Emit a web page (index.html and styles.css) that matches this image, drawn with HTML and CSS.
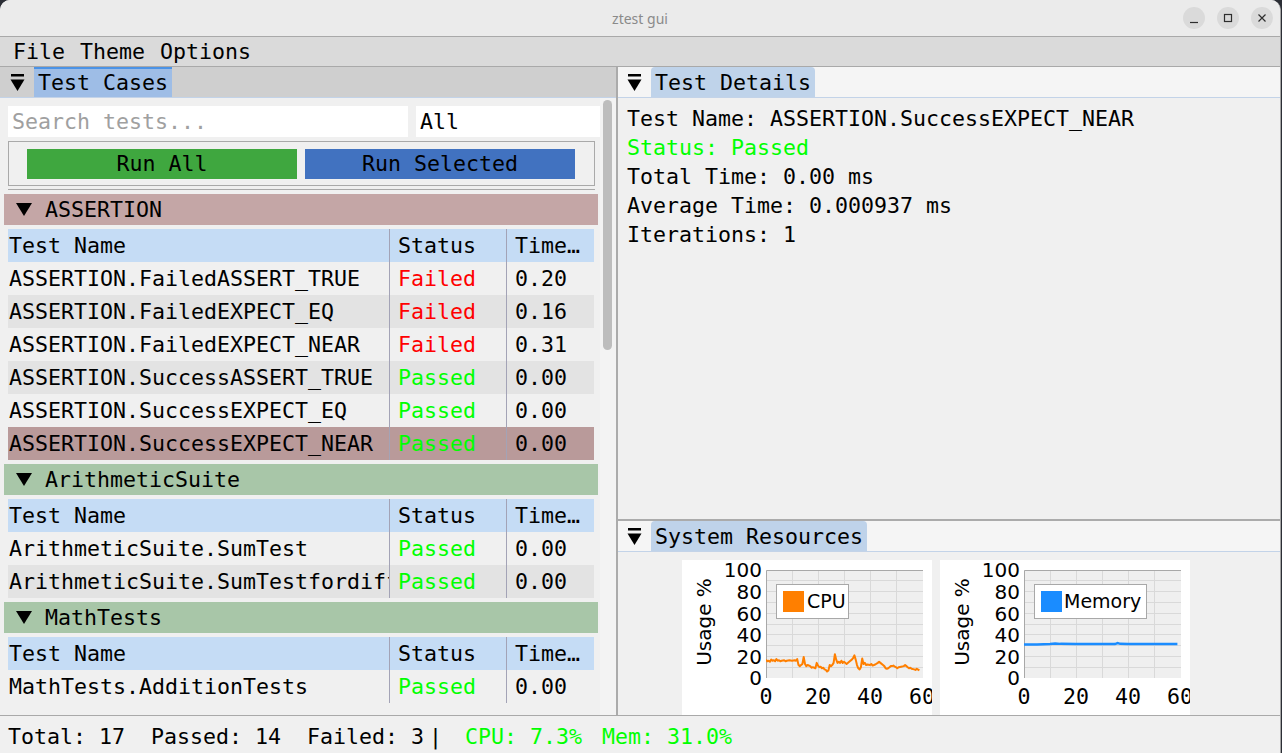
FILE: index.html
```html
<!DOCTYPE html>
<html>
<head>
<meta charset="utf-8">
<title>ztest gui</title>
<link rel="stylesheet" href="styles.css">
</head>
<body>
<div class="window">
  <div class="titlebar">
    <span></span>
    <span class="title">ztest gui</span>
    <div class="wbtns">
      <span class="wbtn"><svg width="22" height="22" viewBox="0 0 22 22"><line x1="7" y1="15.5" x2="15" y2="15.5" stroke="#2e2e2e" stroke-width="1.2"/></svg></span>
      <span class="wbtn"><svg width="22" height="22" viewBox="0 0 22 22"><rect x="7.5" y="7.5" width="7" height="7" fill="none" stroke="#2e2e2e" stroke-width="1.2"/></svg></span>
      <span class="wbtn"><svg width="22" height="22" viewBox="0 0 22 22"><path d="M7.5 7.5 L14.5 14.5 M14.5 7.5 L7.5 14.5" stroke="#2e2e2e" stroke-width="1.2"/></svg></span>
    </div>
  </div>

  <div class="menubar">
    <span class="menu">File</span><span class="menu">Theme</span><span class="menu">Options</span>
  </div>

  <div class="main">
    <div class="left">
      <div class="phead phead-dark">
        <svg class="picon" width="15" height="17" viewBox="0 0 15 17"><rect x="1" y="0" width="13" height="2.5" fill="#000"/><path d="M0.5 5.5 H14.5 L7.5 17 Z" fill="#000"/></svg>
        <span class="ptab ptab-focus">Test Cases</span>
      </div>
      <div class="lcontent">
        <div class="filters">
          <div class="search">Search tests...</div>
          <div class="combo">All</div>
        </div>
        <div class="btnframe">
          <div class="btn btn-green">Run All</div>
          <div class="btn btn-blue">Run Selected</div>
        </div>
        <div class="sep"></div>

        <div class="group group-red"><svg class="tri" width="16" height="13" viewBox="0 0 16 13"><path d="M0 0 H16 L8 13 Z" fill="#000"/></svg>ASSERTION</div>
        <div class="table">
          <div class="tr th"><div class="td">Test Name</div><div class="td">Status</div><div class="td">Time…</div></div>
          <div class="tr"><div class="td">ASSERTION.FailedASSERT_TRUE</div><div class="td fail">Failed</div><div class="td">0.20</div></div>
          <div class="tr alt"><div class="td">ASSERTION.FailedEXPECT_EQ</div><div class="td fail">Failed</div><div class="td">0.16</div></div>
          <div class="tr"><div class="td">ASSERTION.FailedEXPECT_NEAR</div><div class="td fail">Failed</div><div class="td">0.31</div></div>
          <div class="tr alt"><div class="td">ASSERTION.SuccessASSERT_TRUE</div><div class="td pass">Passed</div><div class="td">0.00</div></div>
          <div class="tr"><div class="td">ASSERTION.SuccessEXPECT_EQ</div><div class="td pass">Passed</div><div class="td">0.00</div></div>
          <div class="tr sel"><div class="td">ASSERTION.SuccessEXPECT_NEAR</div><div class="td pass">Passed</div><div class="td">0.00</div></div>
        </div>

        <div class="group group-green"><svg class="tri" width="16" height="13" viewBox="0 0 16 13"><path d="M0 0 H16 L8 13 Z" fill="#000"/></svg>ArithmeticSuite</div>
        <div class="table">
          <div class="tr th"><div class="td">Test Name</div><div class="td">Status</div><div class="td">Time…</div></div>
          <div class="tr"><div class="td">ArithmeticSuite.SumTest</div><div class="td pass">Passed</div><div class="td">0.00</div></div>
          <div class="tr alt"><div class="td">ArithmeticSuite.SumTestfordifferentvalues</div><div class="td pass">Passed</div><div class="td">0.00</div></div>
        </div>

        <div class="group group-green"><svg class="tri" width="16" height="13" viewBox="0 0 16 13"><path d="M0 0 H16 L8 13 Z" fill="#000"/></svg>MathTests</div>
        <div class="table">
          <div class="tr th"><div class="td">Test Name</div><div class="td">Status</div><div class="td">Time…</div></div>
          <div class="tr"><div class="td">MathTests.AdditionTests</div><div class="td pass">Passed</div><div class="td">0.00</div></div>
        </div>
      </div>
      <div class="scrolltrack"><div class="thumb"></div></div>
    </div>

    <div class="vdiv"></div>

    <div class="right">
      <div class="details">
        <div class="phead phead-light">
          <svg class="picon" width="15" height="17" viewBox="0 0 15 17"><rect x="1" y="0" width="13" height="2.5" fill="#000"/><path d="M0.5 5.5 H14.5 L7.5 17 Z" fill="#000"/></svg>
          <span class="ptab">Test Details</span>
        </div>
        <div class="dcontent">
          <div class="dline">Test Name: ASSERTION.SuccessEXPECT_NEAR</div>
          <div class="dline pass">Status: Passed</div>
          <div class="dline">Total Time: 0.00 ms</div>
          <div class="dline">Average Time: 0.000937 ms</div>
          <div class="dline">Iterations: 1</div>
        </div>
      </div>
      <div class="hdiv"></div>
      <div class="resources">
        <div class="phead phead-light">
          <svg class="picon" width="15" height="17" viewBox="0 0 15 17"><rect x="1" y="0" width="13" height="2.5" fill="#000"/><path d="M0.5 5.5 H14.5 L7.5 17 Z" fill="#000"/></svg>
          <span class="ptab">System Resources</span>
        </div>
        <div class="rcontent">
          <svg class="chart" width="250" height="160" viewBox="0 0 250 160">
            <defs><clipPath id="pc1"><rect x="84" y="10" width="157" height="108"/></clipPath></defs>
            <rect x="84" y="10" width="157" height="108" fill="#efefef"/>
            <g stroke="#d9d9d9" stroke-width="1">
              <line x1="84" y1="107.5" x2="241" y2="107.5"/><line x1="84" y1="96.5" x2="241" y2="96.5"/>
              <line x1="84" y1="85.5" x2="241" y2="85.5"/><line x1="84" y1="74.5" x2="241" y2="74.5"/>
              <line x1="84" y1="64.5" x2="241" y2="64.5"/><line x1="84" y1="53.5" x2="241" y2="53.5"/>
              <line x1="84" y1="42.5" x2="241" y2="42.5"/><line x1="84" y1="31.5" x2="241" y2="31.5"/>
              <line x1="84" y1="20.5" x2="241" y2="20.5"/>
              <line x1="110.5" y1="10" x2="110.5" y2="118"/><line x1="136.5" y1="10" x2="136.5" y2="118"/>
              <line x1="162.5" y1="10" x2="162.5" y2="118"/><line x1="188.5" y1="10" x2="188.5" y2="118"/>
              <line x1="214.5" y1="10" x2="214.5" y2="118"/>
            </g>
            <path d="M84.5 118 V10.5 H241" fill="none" stroke="#a8a8a8"/>
            <g clip-path="url(#pc1)">
              <g transform="translate(84 118) scale(2.6 -1.08)">
                <polyline fill="none" stroke="#ff7f00" stroke-width="2" vector-effect="non-scaling-stroke" stroke-linejoin="round"
                  points="0,17 0.5,15.5 1,16 1.5,15 2,17 2.5,16 3,16.5 3.5,15.5 4,17.5 4.5,16 5,16.5 5.5,15.5 6,16 7,16.5 7.5,15.5 8,16 9,16.5 10,16 11,16.5 11.5,16 12,17.5 12.5,12 13,11 13.5,12 14,13 14.5,19.5 15,13 15.5,11 16,12 17,11 17.5,9.5 18,10 19,9 19.5,14 20,11.5 20.5,10 21,10.5 21.5,9 22,9.5 22.5,8 23,7.5 23.5,6 24,7 24.5,12 25,11 25.5,12 26,14 26.5,22 27,17 27.5,14 28,15 28.5,14 29,16 29.5,14 30,15 31,13 32,15 33,17 33.5,18.5 34,21 34.5,17 35,12 35.5,9 36,8 36.5,10 37,18 37.5,13 38,14 38.5,12 39,12.5 40,12 40.5,13 41,11.5 42,12.5 43,14 43.5,15 44,14 45,12 45.5,11 46,9 46.5,8.5 47,9 47.5,10 48,11 48.5,11 49,11.5 49.5,10.5 50,10 50.5,9 51,10 52,10.5 53,11 53.5,12 54,11 54.5,10 55,9 55.5,9.5 56,8.5 57,8 57.5,7.5 58,8.5 59,7"/>
              </g>
            </g>
            <g class="ylab" text-anchor="end">
              <text x="80" y="17">100</text><text x="80" y="39">80</text><text x="80" y="61">60</text>
              <text x="80" y="82">40</text><text x="80" y="104">20</text><text x="80" y="125">0</text>
            </g>
            <g class="xlab" text-anchor="middle">
              <text x="84" y="144">0</text><text x="136" y="144">20</text><text x="188" y="144">40</text><text x="240" y="144">60</text>
            </g>
            <text class="alab" text-anchor="middle" transform="translate(29 62) rotate(-90)">Usage %</text>
            <rect x="94.5" y="24.5" width="72" height="34" fill="#fff" stroke="#a8a8a8"/>
            <rect x="101" y="31" width="21" height="21" fill="#ff7f00"/>
            <text class="leg" x="125" y="48">CPU</text>
          </svg>

          <svg class="chart" width="250" height="160" viewBox="0 0 250 160">
            <defs><clipPath id="pc2"><rect x="84" y="10" width="157" height="108"/></clipPath></defs>
            <rect x="84" y="10" width="157" height="108" fill="#efefef"/>
            <g stroke="#d9d9d9" stroke-width="1">
              <line x1="84" y1="107.5" x2="241" y2="107.5"/><line x1="84" y1="96.5" x2="241" y2="96.5"/>
              <line x1="84" y1="85.5" x2="241" y2="85.5"/><line x1="84" y1="74.5" x2="241" y2="74.5"/>
              <line x1="84" y1="64.5" x2="241" y2="64.5"/><line x1="84" y1="53.5" x2="241" y2="53.5"/>
              <line x1="84" y1="42.5" x2="241" y2="42.5"/><line x1="84" y1="31.5" x2="241" y2="31.5"/>
              <line x1="84" y1="20.5" x2="241" y2="20.5"/>
              <line x1="110.5" y1="10" x2="110.5" y2="118"/><line x1="136.5" y1="10" x2="136.5" y2="118"/>
              <line x1="162.5" y1="10" x2="162.5" y2="118"/><line x1="188.5" y1="10" x2="188.5" y2="118"/>
              <line x1="214.5" y1="10" x2="214.5" y2="118"/>
            </g>
            <path d="M84.5 118 V10.5 H241" fill="none" stroke="#a8a8a8"/>
            <g clip-path="url(#pc2)">
              <g transform="translate(84 118) scale(2.6 -1.08)">
                <polyline fill="none" stroke="#1a8cff" stroke-width="2.5" vector-effect="non-scaling-stroke"
                  points="0,31 5,31.1 10,31.5 12,32 14,31.6 20,31.5 30,31.4 35,31.4 36,32.3 37,31.6 40,31.4 50,31.4 59,31.5"/>
              </g>
            </g>
            <g class="ylab" text-anchor="end">
              <text x="80" y="17">100</text><text x="80" y="39">80</text><text x="80" y="61">60</text>
              <text x="80" y="82">40</text><text x="80" y="104">20</text><text x="80" y="125">0</text>
            </g>
            <g class="xlab" text-anchor="middle">
              <text x="84" y="144">0</text><text x="136" y="144">20</text><text x="188" y="144">40</text><text x="240" y="144">60</text>
            </g>
            <text class="alab" text-anchor="middle" transform="translate(29 62) rotate(-90)">Usage %</text>
            <rect x="94.5" y="24.5" width="112" height="34" fill="#fff" stroke="#a8a8a8"/>
            <rect x="101" y="31" width="21" height="21" fill="#1a8cff"/>
            <text class="leg" x="124" y="48">Memory</text>
          </svg>
        </div>
      </div>
    </div>
  </div>

  <div class="status">
    <span class="st-main">Total: 17  Passed: 14  Failed: 3</span><span class="st-bar">|</span><span class="st-cpu pass">CPU: 7.3%</span><span class="st-mem pass">Mem: 31.0%</span>
  </div>
</div>
</body>
</html>
```

FILE: styles.css
```css
* { box-sizing: border-box; margin: 0; padding: 0; }
html, body { width: 1282px; height: 753px; overflow: hidden; }
body {
  background: #2b2e35;
  font-family: "DejaVu Sans Mono", "Liberation Mono", monospace;
  font-size: 21.6px;
  color: #000;
}
.window {
  width: 1281px;
  height: 753px;
  background: #f0f0f0;
  border-radius: 10px 10px 0 0;
  overflow: hidden;
  display: flex;
  flex-direction: column;
  border-right: 1px solid #a4a4a4;
}

/* title bar */
.titlebar {
  height: 36px;
  flex: none;
  background: #ebebeb;
  display: grid;
  grid-template-columns: 1fr auto 1fr;
  align-items: center;
}
.title {
  font-family: "Noto Sans", "DejaVu Sans", sans-serif;
  font-size: 14px;
  color: #8a8a8a;
}
.wbtns {
  justify-self: end;
  display: flex;
  gap: 12px;
  padding-right: 7px;
}
.wbtn {
  width: 22px;
  height: 22px;
  border-radius: 50%;
  background: #dadada;
  display: flex;
}

/* menu bar */
.menubar {
  height: 31px;
  flex: none;
  background: #dadada;
  border-top: 1px solid #a9a9a9;
  border-bottom: 1px solid #a9a9a9;
  display: flex;
  padding-left: 5.5px;
  line-height: 29px;
}
.menu { padding: 0 7.5px; }

/* main area */
.main {
  flex: 1;
  display: flex;
  min-height: 0;
}
.left {
  width: 616px;
  flex: none;
  display: flex;
  flex-direction: column;
  position: relative;
  overflow: hidden;
}
.vdiv { width: 2px; flex: none; background: #ababab; }
.right {
  flex: 1;
  display: flex;
  flex-direction: column;
  min-width: 0;
}

/* panel headers */
.phead {
  height: 31px;
  flex: none;
  display: flex;
  align-items: stretch;
  border-bottom: 1px solid #c3d3e8;
  padding-left: 10px;
}
.phead-dark { background: #cfcfcf; }
.phead-light { background: #f5f5f5; padding-left: 9px; }
.picon { align-self: center; margin-right: 9px; margin-top: 1px; }
.ptab {
  padding: 2px 4px 0;
  line-height: 28px;
  background: #bfd3ea;
  border-radius: 4px 4px 0 0;
}
.ptab-focus {
  background: #9ebde6;
  border-top: 2px solid #4b93e6;
  padding-top: 0;
  border-radius: 0;
}

/* left content */
.lcontent {
  flex: 1;
  padding: 8px 0 0 8px;
  overflow: hidden;
}
.filters { display: flex; height: 31px; margin-bottom: 4px; }
.search, .combo {
  background: #fff;
  line-height: 31px;
  padding-left: 4px;
  white-space: nowrap;
}
.search { width: 400px; color: #a0a0a0; }
.combo { width: 184px; margin-left: 8px; }
.btnframe {
  width: 587px;
  height: 45px;
  border: 1px solid #a9a9a9;
  padding: 7px 18px 0;
  display: flex;
  gap: 8px;
}
.btn {
  width: 270px;
  height: 30px;
  line-height: 30px;
  text-align: center;
}
.btn-green { background: #3fa73f; }
.btn-blue { background: #4172c0; }
.sep { width: 587px; height: 1px; background: #a9a9a9; margin: 3px 0 4px; }

.group {
  margin-left: -4px;
  width: 594px;
  height: 31px;
  display: flex;
  align-items: center;
  padding-left: 12px;
  margin-bottom: 4px;
}
.tri { margin-right: 13px; }
.group-red { background: #c4a6a6; }
.group-green { background: #a8c6a8; }

.table { width: 586px; margin-bottom: 4px; }
.tr {
  display: grid;
  grid-template-columns: 381px 117px 88px;
  height: 33px;
  line-height: 33px;
}
.td { white-space: nowrap; overflow: hidden; padding-left: 1px; }
.td + .td { border-left: 1px solid #a3a3b6; padding-left: 8px; }
.th { background: #c5dcf5; }
.alt { background: #e3e3e3; }
.sel { background: #b99a9a; }
.pass { color: #00ff00; }
.fail { color: #ff0000; }

.scrolltrack {
  position: absolute;
  left: 600px;
  top: 31px;
  bottom: 0;
  width: 16px;
  background: #f3f3f3;
}
.thumb {
  position: absolute;
  left: 3px;
  top: 2px;
  width: 9px;
  height: 250px;
  border-radius: 5px;
  background: #bdbdbd;
}

/* right */
.details { height: 452px; flex: none; display: flex; flex-direction: column; }
.dcontent { flex: 1; padding: 6px 9px; }
.dline { line-height: 29px; white-space: nowrap; }
.hdiv { height: 2px; flex: none; background: #ababab; }
.resources { flex: 1; display: flex; flex-direction: column; min-height: 0; }
.rcontent {
  flex: 1;
  padding: 8px 0 0 64px;
  display: flex;
  gap: 8px;
  overflow: hidden;
  align-items: flex-start;
}
.chart { background: #fff; flex: none; display: block; }
.ylab, .alab {
  font-family: "DejaVu Sans", sans-serif;
  font-size: 20px;
  fill: #000;
}
.leg {
  font-family: "DejaVu Sans", sans-serif;
  font-size: 19px;
  fill: #000;
}
.xlab {
  font-family: "DejaVu Sans Mono", monospace;
  font-size: 21.6px;
  fill: #000;
}

/* status */
.status {
  height: 38px;
  flex: none;
  border-top: 1px solid #a9a9a9;
  background: #f0f0f0;
  display: flex;
  align-items: center;
  padding: 3px 0 0 8px;
  white-space: pre;
}
.st-bar { margin-left: 5px; }
.st-cpu { margin-left: 23px; }
.st-mem { margin-left: 20px; }
```
